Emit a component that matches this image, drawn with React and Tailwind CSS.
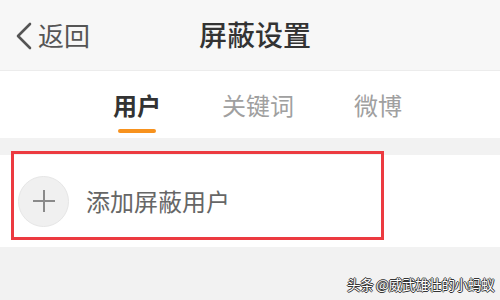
import React from "react";

const font = { fontFamily: '"Noto Sans CJK SC", "Noto Sans", sans-serif' };

export default function App() {
  return (
    <div className="w-[500px] h-[300px] bg-[#f2f2f2] overflow-hidden relative" style={font}>
      {/* Header */}
      <div className="h-[71px] bg-[#f7f7f7] border-b border-[#ececec] flex items-center relative">
        <div className="flex items-center pl-[13px] gap-[3px] text-[#555]">
          <svg width="22" height="30" viewBox="0 0 22 30" className="mt-[1px]">
            <path d="M17 3 L5 15 L17 27" fill="none" stroke="#555" strokeWidth="2.6" strokeLinecap="round" strokeLinejoin="round" />
          </svg>
          <span className="text-[26px] leading-none">返回</span>
        </div>
        <div className="absolute left-[199px] top-[17px] text-[28px] leading-[34px] font-medium text-[#333]">屏蔽设置</div>
      </div>
      {/* Tabs */}
      <div className="h-[67px] bg-white flex items-start">
        <div className="ml-[113px] mt-[19px] flex flex-col items-center">
          <span className="text-[24px] leading-[30px] font-bold text-[#333]">用户</span>
          <div className="mt-[9px] w-[38px] h-[4px] rounded-full bg-[#f7921e]" />
        </div>
        <span className="ml-[61px] mt-[19px] text-[24px] leading-[30px] text-[#a0a0a0]">关键词</span>
        <span className="ml-[60px] mt-[19px] text-[24px] leading-[30px] text-[#a0a0a0]">微博</span>
      </div>
      {/* Row */}
      <div className="mt-[17px] h-[92px] bg-white flex items-center pl-[18px]">
        <div className="w-[51px] h-[51px] rounded-full bg-[#f0f0f0] border border-[#e6e6e6] flex items-center justify-center">
          <svg width="24" height="24" viewBox="0 0 24 24">
            <path d="M12 1 V23 M1 12 H23" stroke="#8a8a8a" strokeWidth="2" />
          </svg>
        </div>
        <span className="ml-[17px] text-[24px] leading-none text-[#666]">添加屏蔽用户</span>
      </div>
      {/* Red annotation box */}
      <div className="absolute left-[11px] top-[151px] w-[373px] h-[89px] border-[3px] border-[#ec3a40]" />
      {/* Watermark */}
      <div
        className="absolute left-[347px] top-[275px] text-[13.5px] leading-[18px] text-white tracking-[-0.3px]"
        style={{ textShadow: "1px 0 0 #333, -1px 0 0 #333, 0 1px 0 #333, 0 -1px 0 #333" }}
      >
        头条 @威武雄壮的小蚂蚁
      </div>
    </div>
  );
}
